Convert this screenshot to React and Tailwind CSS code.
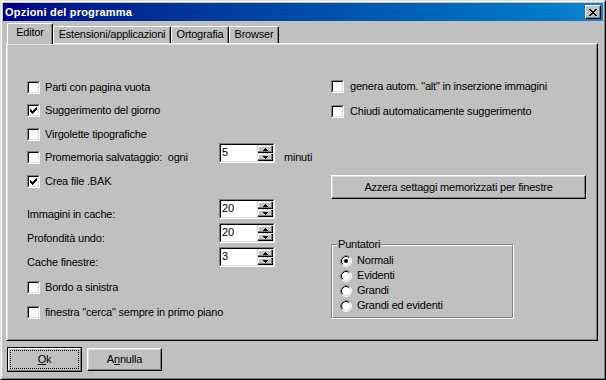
import React from 'react';

const CHECK = [
  '......X',
  '.....XX',
  'X...XXX',
  'XX.XXX.',
  'XXXXX..',
  '.XXX...',
  '..X....',
];

const CLOSE = [
  'XX....XX',
  '.XX..XX.',
  '..XXXX..',
  '...XX...',
  '..XXXX..',
  '.XX..XX.',
  'XX....XX',
];

const UP = ['..X..', '.XXX.', 'XXXXX'];
const DOWN = ['XXXXX', '.XXX.', '..X..'];

function Pixels({ rows, color = '#000' }) {
  const w = rows[0].length;
  const h = rows.length;
  return (
    <svg width={w} height={h} viewBox={`0 0 ${w} ${h}`} shapeRendering="crispEdges" className="block">
      {rows.flatMap((r, y) =>
        [...r].map((c, x) =>
          c === 'X' ? <rect key={`${x}-${y}`} x={x} y={y} width="1" height="1" fill={color} /> : null
        )
      )}
    </svg>
  );
}

function Check({ checked }) {
  return (
    <span className="block w-[13px] h-[13px] shrink-0 border border-t-[#808080] border-l-[#808080] border-b-white border-r-white">
      <span className="flex w-full h-full items-center justify-center bg-white border border-t-black border-l-black border-b-[#dfdfdf] border-r-[#dfdfdf]">
        {checked && <Pixels rows={CHECK} />}
      </span>
    </span>
  );
}

function CheckRow({ label, checked, h = 'h-[24px]', gap = 'gap-[5px]' }) {
  return (
    <div className={`${h} flex items-center ${gap}`}>
      <Check checked={checked} />
      <span className="whitespace-pre">{label}</span>
    </div>
  );
}

function Radio({ checked }) {
  return (
    <svg width="12" height="12" viewBox="0 0 12 12" className="block shrink-0">
      <circle cx="6" cy="6" r="5" fill="#fff" />
      <path d="M2.11 9.89 A5.5 5.5 0 0 1 9.89 2.11" stroke="#808080" fill="none" />
      <path d="M9.89 2.11 A5.5 5.5 0 0 1 2.11 9.89" stroke="#fff" fill="none" />
      <path d="M2.82 9.18 A4.5 4.5 0 0 1 9.18 2.82" stroke="#000" fill="none" />
      <path d="M9.18 2.82 A4.5 4.5 0 0 1 2.82 9.18" stroke="#dfdfdf" fill="none" />
      {checked && <circle cx="6" cy="6" r="2" fill="#000" />}
    </svg>
  );
}

function SpinBtn({ rows }) {
  return (
    <div className="h-[8px] flex items-center justify-center bg-[#c0c0c0] border-t border-l border-t-[#dfdfdf] border-l-[#dfdfdf] shadow-[inset_-1px_-1px_0_#000,inset_-2px_-2px_0_#808080,inset_1px_1px_0_#fff]">
      <Pixels rows={rows} />
    </div>
  );
}

function Spinner({ value }) {
  return (
    <div className="w-[56px] h-[20px] shrink-0 border border-t-[#808080] border-l-[#808080] border-b-white border-r-white">
      <div className="h-full flex bg-white border border-t-black border-l-black border-b-[#dfdfdf] border-r-[#dfdfdf]">
        <span className="flex-1 pl-[1px] leading-[15px]">{value}</span>
        <div className="w-[16px] flex flex-col">
          <SpinBtn rows={UP} />
          <SpinBtn rows={DOWN} />
        </div>
      </div>
    </div>
  );
}

function Tab({ label, selected, w }) {
  if (selected) {
    return (
      <div className={`${w} h-[21px] -mb-px relative z-10 bg-[#c0c0c0] rounded-t-[2px] border-t border-l border-r border-t-white border-l-white border-r-black shadow-[inset_-1px_0_0_#808080] pt-[2px] text-center`}>
        {label}
      </div>
    );
  }
  return (
    <div className={`${w} h-[17px] bg-[#c0c0c0] rounded-t-[2px] border-t border-l border-r border-t-white border-l-white border-r-black shadow-[inset_-1px_0_0_#808080] pt-[1px] text-center`}>
      {label}
    </div>
  );
}

function SpinRow({ label, value }) {
  return (
    <div className="h-[24px] flex items-start">
      <span className="w-[192px] mt-[9px]">{label}</span>
      <Spinner value={value} />
    </div>
  );
}

export default function App() {
  return (
    <div className="w-[606px] h-[380px] bg-[#c0c0c0] font-['Liberation_Sans',Arial,sans-serif] text-[11px] leading-[13px] tracking-[-0.2px] text-black border border-t-[#dfdfdf] border-l-[#dfdfdf] border-r-black border-b-black">
      <div className="h-full flex flex-col p-px border border-t-white border-l-white border-r-[#808080] border-b-[#808080]">
        {/* title bar */}
        <div className="h-[18px] shrink-0 flex items-center justify-between pl-[2px] pr-[2px] bg-linear-to-r from-[#000080] to-[#1084d0]">
          <span className="font-bold text-white tracking-[0.2px]">Opzioni del programma</span>
          <div className="w-[16px] h-[14px] flex items-center justify-center bg-[#c0c0c0] border border-t-white border-l-white border-b-black border-r-black shadow-[inset_-1px_-1px_0_#808080]">
            <Pixels rows={CLOSE} />
          </div>
        </div>

        <div className="px-[3px] pt-[2px] flex flex-col">
          {/* tabs */}
          <div className="h-[20px] flex items-end pl-px">
            <Tab label="Editor" selected w="w-[46px]" />
            <Tab label="Estensioni/applicazioni" w="w-[118px]" />
            <Tab label="Ortografia" w="w-[58px]" />
            <Tab label="Browser" w="w-[50px]" />
          </div>

          {/* panel */}
          <div className="w-[592px] h-[298px] border border-t-white border-l-white border-r-black border-b-black">
            <div className="h-full flex border border-t-[#dfdfdf] border-l-[#dfdfdf] border-r-[#808080] border-b-[#808080]">
              <div className="ml-[19px] mt-[30px] w-[304px] flex flex-col">
                <CheckRow label="Parti con pagina vuota" h="h-[24px]" />
                <CheckRow label="Suggerimento del giorno" checked h="h-[23px]" />
                <CheckRow label="Virgolette tipografiche" h="h-[24px]" />
                <div className="h-[23px] flex items-center">
                  <div className="w-[192px] flex items-center gap-[5px]">
                    <Check />
                    <span className="whitespace-pre">Promemoria salvataggio:  ogni</span>
                  </div>
                  <div className="mb-[9px]">
                    <Spinner value="5" />
                  </div>
                  <span className="ml-[9px]">minuti</span>
                </div>
                <CheckRow label="Crea file .BAK" checked h="h-[24px]" />

                <div className="mt-[6px] flex flex-col">
                  <SpinRow label="Immagini in cache:" value="20" />
                  <SpinRow label="Profondità undo:" value="20" />
                  <SpinRow label="Cache finestre:" value="3" />
                </div>

                <div className="mt-[4px] flex flex-col">
                  <CheckRow label="Bordo a sinistra" h="h-[25px]" />
                  <CheckRow label={'finestra "cerca" sempre in primo piano'} h="h-[25px]" />
                </div>
              </div>

              <div className="mt-[29px] flex flex-col">
                <CheckRow label={'genera autom. "alt" in inserzione immagini'} h="h-[25px]" gap="gap-[6px]" />
                <CheckRow label="Chiudi automaticamente suggerimento" h="h-[25px]" gap="gap-[6px]" />

                <div className="mt-[51px] w-[255px] h-[24px] flex items-center justify-center bg-[#c0c0c0] border border-t-white border-l-white border-b-black border-r-black shadow-[inset_-1px_-1px_0_#808080,inset_1px_1px_0_#dfdfdf]">
                  Azzera settaggi memorizzati per finestre
                </div>

                <div className="mt-[45px] w-[183px] h-[75px] relative border border-t-[#808080] border-l-[#808080] border-b-white border-r-white">
                  <div className="h-full border border-t-white border-l-white border-b-[#808080] border-r-[#808080] pt-[7px] pl-[7px] flex flex-col">
                    {['Normali', 'Evidenti', 'Grandi', 'Grandi ed evidenti'].map((r, i) => (
                      <div key={r} className="h-[15px] flex items-center gap-[5px]">
                        <Radio checked={i === 0} />
                        <span>{r}</span>
                      </div>
                    ))}
                  </div>
                  <span className="absolute -top-[7px] left-[5px] px-px bg-[#c0c0c0]">Puntatori</span>
                </div>
              </div>
            </div>
          </div>

          {/* buttons */}
          <div className="mt-[6px] pl-px flex items-start gap-[5px]">
            <div className="w-[75px] h-[25px] border border-black">
              <div className="h-full p-px border border-t-white border-l-white border-b-[#808080] border-r-[#808080]">
                <div className="h-full flex items-center justify-center border border-dotted border-black">
                  <span><span className="underline">O</span>k</span>
                </div>
              </div>
            </div>
            <div className="mt-px w-[75px] h-[23px] flex items-center justify-center border border-t-white border-l-white border-b-black border-r-black shadow-[inset_-1px_-1px_0_#808080,inset_1px_1px_0_#dfdfdf]">
              <span>A<span className="underline">n</span>nulla</span>
            </div>
          </div>
        </div>
      </div>
    </div>
  );
}
